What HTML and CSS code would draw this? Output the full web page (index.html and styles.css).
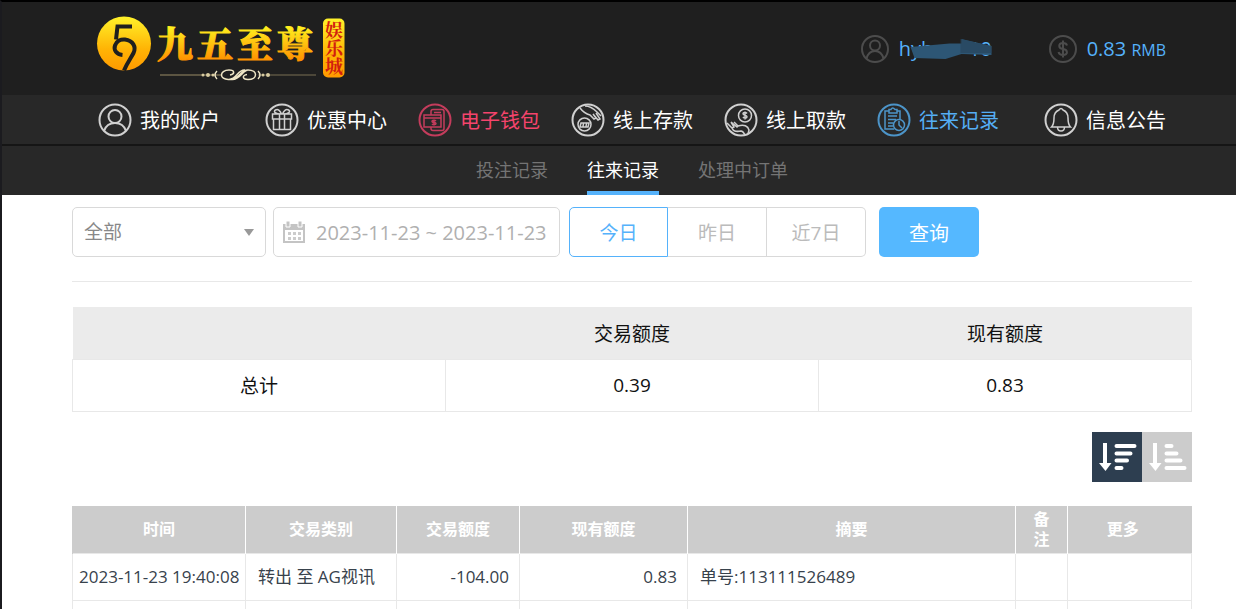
FILE: index.html
```html
<!DOCTYPE html>
<html lang="zh-CN">
<head>
<meta charset="utf-8">
<title>往来记录</title>
<link rel="stylesheet" href="styles.css">
</head>
<body>
<header class="top">
  <a class="logo" href="#" aria-label="九五至尊娱乐城">
    <svg width="250" height="66" viewBox="96 15 250 66">
      <defs>
        <linearGradient id="gold" x1="0" y1="0" x2="0" y2="1"><stop offset="0" stop-color="#fff22a"/><stop offset=".6" stop-color="#ffb405"/><stop offset="1" stop-color="#ff9a00"/></linearGradient>
        <linearGradient id="goldText" gradientUnits="userSpaceOnUse" x1="0" y1="26" x2="0" y2="59"><stop offset="0" stop-color="#fff01e"/><stop offset="1" stop-color="#ff9200"/></linearGradient>
      </defs>
      <circle cx="124" cy="42.500" r="27" fill="url(#gold)"/>
      <path d="M132 25.500H117.500L116 38.500M122.500 54C116.500 53.500 113.500 49 115 44.500C116.500 40 121 38 125 38.500C133 39.500 136.500 46 133.500 52C131 57 127 62 124 69.500" fill="none" stroke="#1f1f1f" stroke-width="4"/>
      <text class="logo-name" x="157 197 237 277" y="57" fill="url(#goldText)" stroke="url(#goldText)">九五至尊</text>
      <rect x="160" y="73.500" width="61" height="1" fill="#b8a878" opacity=".8"/>
      <rect x="258" y="73.500" width="58" height="1" fill="#b8a878" opacity=".6"/>
      <g fill="none" stroke="#eee5c5" stroke-width="1.500">
        <path d="M245 69C238 68 237 78 229 78.500C219 79 219 69 229 69C235 69 235 73 230 74M229 78.500C239 79 240 69 248 69C258 69 258 78.500 248 78.500C242 78.500 242 74 247 73.500M232 78.500C240 79 243 69 248 69"/>
        <path d="M217 70Q213 74 217 78M258 70Q262 74 258 78"/>
      </g>
      <g fill="#d8cba0"><circle cx="203" cy="74" r="1.500"/><circle cx="208" cy="74" r="2"/><circle cx="213" cy="74" r="1.500"/><circle cx="263" cy="74" r="1.500"/><circle cx="268" cy="74" r="2"/></g>
      <rect x="323" y="17.500" width="21.500" height="59" rx="5" fill="url(#gold)"/>
      <text class="logo-seal" x="334" y="20" fill="#d2200e">娱乐城</text>
    </svg>
  </a>
  <div class="account">
    <svg class="account-icon" viewBox="0 0 28 28"><circle cx="14" cy="14" r="13"/><circle cx="14" cy="10.500" r="5"/><path d="M5.500 23.500C7 18 10 16 14 16s7 2 8.500 7.500"/></svg>
    <span class="user"><span>hyb</span><span>10</span>
      <svg class="mask" viewBox="0 0 92 22"><path d="M11 8L50 4.500H62V0L92 7V16L62 15L46 20L15 19Z" fill="#2d5675"/><path d="M61 0L92 7V14H61Z" fill="#28465c" opacity=".7"/></svg>
    </span>
  </div>
  <div class="account">
    <svg class="account-icon" viewBox="0 0 28 28"><circle cx="14" cy="14" r="13"/><path d="M18 10.500C17.500 8.500 16 8 14 8c-5 0-5 5.500 0 6s5.500 6 0 6c-2.500 0-4-1-4.500-3M14 5.500v17"/></svg>
    <span class="balance">0.83 <small>RMB</small></span>
  </div>
</header>
<nav class="main-nav">
  <a href="#" class="nav-item nav-first"><svg viewBox="0 0 34 34"><circle cx="17" cy="17" r="15.500"/><circle cx="17" cy="13.500" r="6.500"/><path d="M6 28C8 22 12 20 17 20s9 2 11 8"/></svg>我的账户</a>
  <a href="#" class="nav-item"><svg viewBox="0 0 34 34"><circle cx="17" cy="17" r="15.500"/><path class="fine" d="M7.500 11h19v5h-19zM8.500 16h17v10.500h-17zM14.500 11v15.500M19.500 11v15.500M16.500 11C10 11 8 8.500 10.500 7s5 1 6 4M17.500 11c6.500 0 8.500-2.500 6-4s-5 1-6 4"/></svg>优惠中心</a>
  <a href="#" class="nav-item red"><svg viewBox="0 0 34 34"><circle cx="17" cy="17" r="15.500"/><path class="fine" d="M13 12V8.500q0-2 2-2h9q2 0 2 2v17q0 2-2 2h-9q-2 0-2-2V24M6 12h17v12H6zM6 15h17M16 9.500h7M16 16.500v6M18 18c-1-1-4-1-4 .5s4 .5 4 2-3 1.500-4 .5"/></svg>电子钱包</a>
  <a href="#" class="nav-item"><svg viewBox="0 0 34 34"><circle cx="17" cy="17" r="15.500"/><circle class="fine" cx="13.500" cy="21.500" r="6.500"/><path class="fine" d="M9 24l1-4h8l-1 4zM12.500 20.500l-.5 3M15.500 20.500l-.5 3M9 5c3 4 6 6 10 7l4 4 2-1-3-4M14 3c5 0 9 3 12 6l4 4M22 11l5 6 2-1-4-6"/></svg>线上存款</a>
  <a href="#" class="nav-item"><svg viewBox="0 0 34 34"><circle cx="17" cy="17" r="15.500"/><circle class="fine" cx="21" cy="12.500" r="6.500"/><path class="fine" d="M23 10.500c-1-1.500-4-1.500-4 .3s4 1.200 4 3-3 1.700-4 .2M21 8.500v8M3 20l5 5 2-1-3-5M7 19l6 5 1-1-4-4M14 23c6-2 10 0 11 4l-1 4M8 25c1 3 4 4 9 3 2 0 3 2 4 4"/></svg>线上取款</a>
  <a href="#" class="nav-item blue" aria-current="page"><svg viewBox="0 0 34 34"><circle cx="17" cy="17" r="15.500"/><path class="fine" d="M12 8H8v18h9M20 8h3v8M12 6.500h2q1.500-3 4 0h2V10h-8zM11 13h9M11 16.500h8M11 20h5M11 23h5"/><circle class="fine" cx="22" cy="22" r="5.500"/><path class="fine" d="M22 18v4l3 3"/></svg>往来记录</a>
  <a href="#" class="nav-item nav-last"><svg viewBox="0 0 34 34"><circle cx="17" cy="17" r="15.500"/><path class="fine" d="M7.500 24c2-2 2.500-4 2.500-9 0-5 2.500-7 5-8q2-3 4 0c2.500 1 5 3 5 8 0 5 .5 7 2.500 9zM13.500 24q0 4 3.500 4t3.500-4"/></svg>信息公告</a>
</nav>
<nav class="tabs">
  <a href="#">投注记录</a>
  <a href="#" class="current">往来记录</a>
  <a href="#">处理中订单</a>
</nav>
<main class="content">
  <form class="filters">
    <div class="select-box">
      <select aria-label="类别"><option>全部</option></select>
      <svg class="caret" viewBox="0 0 10 7"><path d="M0 0h10L5 7z"/></svg>
    </div>
    <label class="date-box">
      <svg viewBox="0 0 22 22"><path d="M0 3h22v19H0z" fill="#c4c4c4"/><path d="M2 9h18v11H2z" fill="#fff"/><path d="M3 0h4v6H3zM15 0h4v6h-4z" fill="#c4c4c4" stroke="#fff"/><path d="M5 11h3v3H5zM10 11h3v3h-3zM15 11h3v3h-3zM5 16h3v3H5zM10 16h3v3h-3zM15 16h3v3h-3z" fill="#ccc"/></svg>
      <input type="text" aria-label="日期范围" value="2023-11-23 ~ 2023-11-23">
    </label>
    <div class="range">
      <button type="button" class="chosen">今日</button>
      <button type="button">昨日</button>
      <button type="button">近7日</button>
    </div>
    <button type="button" class="query">查询</button>
  </form>
  <table class="summary">
    <thead><tr><th></th><th>交易额度</th><th>现有额度</th></tr></thead>
    <tbody><tr><td>总计</td><td>0.39</td><td>0.83</td></tr></tbody>
  </table>
  <div class="sort">
    <button type="button" class="desc" aria-label="降序"><svg viewBox="0 0 50 50"><path d="M11 11h4v20H19.500l-6 8L7 31h4z"/><path class="bars" d="M24.500 14h18M24.500 21.500h14M24.500 28.500h10.500M24.500 36h5"/></svg></button>
    <button type="button" aria-label="升序"><svg viewBox="0 0 50 50"><path d="M11 11h4v20H19.500l-6 8L7 31h4z"/><path class="bars" d="M24.500 14h5M24.500 21.500h10M24.500 28.500h14M24.500 36h18"/></svg></button>
  </div>
  <table class="records">
    <colgroup><col class="c-time"><col class="c-type"><col class="c-amount"><col class="c-balance"><col class="c-summary"><col class="c-note"><col></colgroup>
    <thead><tr><th>时间</th><th>交易类别</th><th>交易额度</th><th>现有额度</th><th>摘要</th><th class="note">备注</th><th class="more">更多</th></tr></thead>
    <tbody>
      <tr><td class="time">2023-11-23 19:40:08</td><td>转出 至 AG视讯</td><td class="num">-104.00</td><td class="num">0.83</td><td>单号:113111526489</td><td></td><td></td></tr>
      <tr><td></td><td></td><td></td><td></td><td></td><td></td><td></td></tr>
    </tbody>
  </table>
</main>
</body>
</html>
```
FILE: styles.css
```css
* { box-sizing: border-box; }
html { overflow: hidden; }
body {
  margin: 0;
  border-top: 2px solid #000;
  border-left: 2px solid #1b1b1f;
  background: #fff;
  color: #111;
  font-family: "Open Sans", "Noto Sans CJK SC", sans-serif;
}
a { color: inherit; text-decoration: none; }
button, input, select { font: inherit; margin: 0; padding: 0; }

.top {
  display: flex;
  align-items: center;
  height: 93px;
  padding: 0 70px 0 94px;
  background: #1f1f1f;
  color: #55b2fb;
}
.logo { display: flex; margin-right: auto; }
.logo-name { font: 900 36px "Noto Serif CJK SC", "Noto Sans CJK SC", serif; stroke-width: 1px; }
.logo-seal { font: 700 18px "Noto Serif CJK SC", "Noto Sans CJK SC", serif; writing-mode: vertical-rl; }
.account { display: flex; align-items: center; gap: 10px; margin-left: 57px; font-size: 20px; }
.account-icon { width: 28px; height: 28px; fill: none; stroke: #4c4c4c; stroke-width: 2; }
.user { position: relative; display: flex; justify-content: space-between; width: 93px; }
.mask { position: absolute; left: 0; top: 4px; width: 93px; height: 22px; }
.balance small { font-size: 16px; }

.main-nav {
  display: flex;
  align-items: center;
  justify-content: space-between;
  height: 51px;
  padding: 0 70px 0 96px;
  border-bottom: 2px solid #151515;
  background: #282828;
  color: #fff;
  font-size: 20px;
}
.nav-item { display: flex; align-items: center; gap: 8px; white-space: nowrap; }
.nav-item svg { width: 34px; height: 34px; fill: none; stroke: #d0d0d0; stroke-width: 2; }
.nav-item .fine { stroke-width: 1.5; }
.nav-first { margin-right: 14px; }
.nav-last { margin-left: 14px; }
.red { color: #f5446c; }
.nav-item.red svg { stroke: #c43c5c; }
.blue { color: #55aef5; }
.nav-item.blue svg { stroke: #4c94c8; }

.tabs {
  display: flex;
  justify-content: center;
  gap: 39px;
  height: 49px;
  padding-left: 26px;
  background: #282828;
  color: #747474;
  font-size: 18px;
  line-height: 48px;
}
.current { height: 49px; border-bottom: 4px solid #55b2fb; color: #fff; }

.content { padding: 12px 44px 0 70px; }
.filters {
  display: flex;
  height: 75px;
  border-bottom: 1px solid #e8e8e8;
  font-size: 19px;
}
.select-box, .date-box {
  position: relative;
  display: flex;
  align-items: center;
  height: 50px;
  border: 1px solid #d9d9d9;
  border-radius: 5px;
}
.select-box { width: 194px; }
.select-box select {
  width: 100%;
  height: 48px;
  padding-left: 11px;
  border: 0;
  appearance: none;
  background: transparent;
  color: #888;
}
.caret { position: absolute; right: 11px; width: 10px; height: 7px; fill: #999; }
.date-box { width: 287px; margin-left: 7px; padding-left: 9px; gap: 11px; }
.date-box svg { flex: none; width: 22px; height: 22px; }
.date-box input { flex: 1; min-width: 0; border: 0; background: none; color: #b0b0b0; font-size: 20px; }
.range { display: flex; margin-left: 9px; }
.range button {
  width: 99px;
  height: 50px;
  border: 1px solid #d9d9d9;
  border-left: 0;
  background: #fff;
  color: #bbb;
}
.range button:last-child { border-radius: 0 5px 5px 0; }
.range .chosen { border: 1px solid #55b2fb; border-radius: 5px 0 0 5px; color: #55b2fb; }
.query {
  width: 100px;
  height: 50px;
  margin-left: 13px;
  border: 0;
  border-radius: 5px;
  background: #55b8ff;
  color: #fff;
  font-size: 20px;
}

table { width: 100%; table-layout: fixed; border-collapse: collapse; }
.summary { margin-top: 25px; font-size: 19px; text-align: center; }
.summary th { height: 52px; padding: 0; background: #ebebeb; font-weight: 400; }
.summary td { height: 52px; padding: 0; border: 1px solid #e8e8e8; }

.sort { display: flex; justify-content: flex-end; margin: 20px 0 24px; }
.sort button { width: 50px; height: 50px; border: 0; background: #ccc; }
.sort .desc { background: #2d3e50; }
.sort svg { display: block; fill: #fff; }
.sort .bars { fill: none; stroke: #fff; stroke-width: 4; stroke-linecap: round; }

.records { font-size: 17px; line-height: 20px; }
.c-time { width: 173px; }
.c-type { width: 151px; }
.c-amount { width: 123px; }
.c-balance { width: 168px; }
.c-summary { width: 328px; }
.c-note { width: 52px; }
.records th {
  height: 48px;
  padding: 0;
  border-left: 1px solid #fff;
  background: #ccc;
  color: #fff;
  font-size: 16px;
}
.records th:first-child { border-left-color: #ccc; }
.records .note { padding: 0 16px; }
.records .more { padding-right: 14px; }
.records td {
  height: 47px;
  padding: 0 12px;
  border: 1px solid #e8e8e8;
  color: #38424c;
  white-space: nowrap;
}
.records .time { padding: 0 6px; text-align: center; }
.records .num { padding-right: 10px; text-align: right; }
```
